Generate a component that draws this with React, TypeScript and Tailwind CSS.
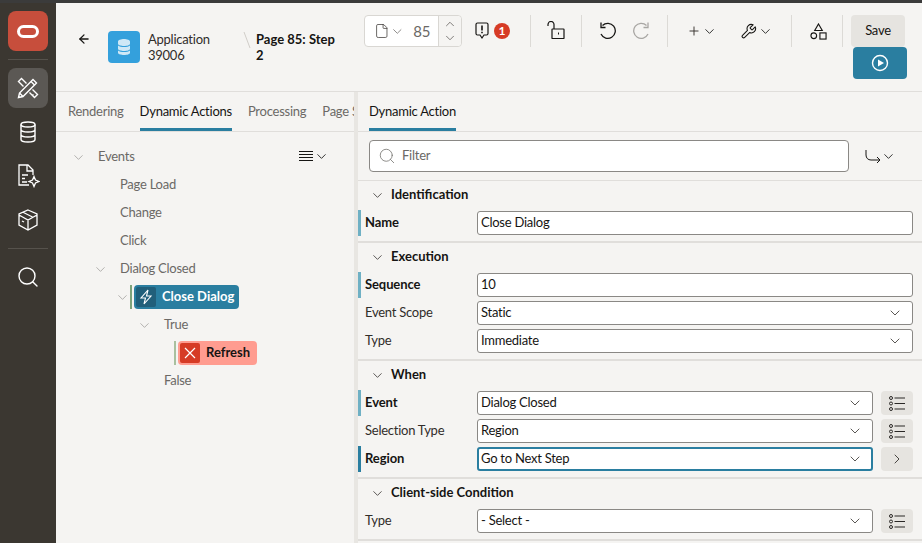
import React from "react";
import { ChevronDown, ChevronUp, ChevronRight, ArrowLeft, Plus, Search, File } from "lucide-react";

const Chev = ({ className = "" }: { className?: string }) => (
  <ChevronDown size={15} strokeWidth={1.25} className={className} />
);

const Divider = () => <div className="w-px h-8 bg-[#dcdad6]" />;

const ListIcon = () => (
  <svg width="16" height="15" viewBox="0 0 16 15" fill="none" stroke="#2a2826" strokeWidth="1">
    <circle cx="2" cy="2" r="1.500" />
    <circle cx="2" cy="7.500" r="1.500" />
    <circle cx="2" cy="13" r="1.500" />
    <path d="M5.500 2H16M5.500 7.500H16M5.500 13H16" />
  </svg>
);

const Sidebar = () => (
  <div className="w-14 shrink-0 bg-[#3b3731] flex flex-col items-center pt-2">
    <div className="w-10 h-10 rounded-lg bg-[#c74e3c] flex items-center justify-center">
      <div className="w-[22px] h-[13px] rounded-full border-[3px] border-white" />
    </div>
    <div className="w-10 h-px bg-[#56524c] mt-2" />
    <div className="w-10 h-10 rounded-lg bg-[#5b5854] mt-2 flex items-center justify-center">
      <svg width="22" height="22" viewBox="0 0 22 22" fill="none" stroke="#fff" strokeWidth="1.400">
        <path d="M1.500 20.500l1-4.500L16 2.500l3.500 3.500L6 19.500z" />
        <path d="M14 4.500l3.500 3.500M2.500 16l3.500 3.500" />
        <path d="M6.500 9.500L1.500 4.500l3-3 5 5M12.500 15.500l3 3 1-1M15.500 12.500l5 5-3 3-5-5" />
      </svg>
    </div>
    <svg className="mt-3" width="24" height="24" viewBox="0 0 24 24" fill="none" stroke="#fff" strokeWidth="1.400">
      <ellipse cx="12" cy="4.500" rx="7" ry="2.500" />
      <path d="M5 4.500v15c0 1.400 3 2.500 7 2.500s7-1.100 7-2.500v-15M5 9.500c0 1.400 3 2.500 7 2.500s7-1.100 7-2.500M5 14.500c0 1.400 3 2.500 7 2.500s7-1.100 7-2.500" />
    </svg>
    <svg className="mt-5" width="24" height="24" viewBox="0 0 24 24" fill="none" stroke="#fff" strokeWidth="1.300">
      <path d="M13 21H3V1h9l5 5v5M11 1v6h6M6 11h6M6 14.500h3M6 18h5" />
      <path d="M18 12.500l1.500 3.500 3.500 1.500-3.500 1.500-1.500 3.500-1.500-3.500-3.500-1.500 3.500-1.500z" />
    </svg>
    <svg className="mt-5" width="24" height="24" viewBox="0 0 24 24" fill="none" stroke="#fff" strokeWidth="1.300">
      <path d="M12 2l9 4v11l-9 5-9-5V6zM3 7l9 5 9-5M12 12v10M7.500 4.500l9 4.500" />
      <path d="M6 13l2 1" />
    </svg>
    <div className="w-10 h-px bg-[#56524c] mt-4" />
    <Search className="mt-4" size={24} strokeWidth={1.400} color="#fff" />
  </div>
);

const Toolbar = () => (
  <div className="h-[89px] shrink-0 flex border-b border-[#e0dedb]">
    <div className="w-[308px] flex pt-7">
      <ArrowLeft className="ml-[21px] mt-[1px]" size={14} strokeWidth={2.200} color="#161513" />
      <div className="ml-[17px] w-8 h-8 rounded-[4px] bg-[#34a0dc] flex items-center justify-center">
        <svg width="12" height="16" viewBox="0 0 12 16" fill="#cfe8f6">
          <path d="M0 2.500C0 1 3 0 6 0s6 1 6 2.500V5c0 1-3 2-6 2S0 6 0 5zM0 6.500C1.500 7.500 3.500 8 6 8s4.500-.5 6-1.500V10c0 1-3 2-6 2s-6-1-6-2zM0 11.500C1.500 12.500 3.500 13 6 13s4.500-.5 6-1.500V14c0 1-3 2-6 2s-6-1-6-2z" />
        </svg>
      </div>
      <div className="ml-2 w-[72px] text-[13px] tracking-[-0.25px] leading-4 text-[#312d2a]">Application 39006</div>
      <svg className="ml-[23px] mt-[1px] shrink-0" width="8" height="16" viewBox="0 0 8 16" stroke="#d0cdc8">
        <path d="M1 0l6 16" />
      </svg>
      <div className="ml-[5px] w-[88px] text-[13px] leading-4 font-bold text-[#161513]">Page 85: Step 2</div>
    </div>
    <div className="flex-1 flex flex-col">
      <div className="flex items-center h-8 mt-3">
        <div className="w-[98px] h-8 rounded-[4px] border border-[#d9d7d3] bg-white flex items-center">
          <File className="ml-[9px]" size={16} strokeWidth={1.100} color="#312d2a" />
          <Chev className="text-[#6b6966]" />
          <span className="ml-[9px] w-[22px] text-[15px] tracking-[-0.25px] text-[#6b6966]">85</span>
          <div className="ml-[3px] w-[24px] h-full border-l border-[#d9d7d3] bg-[#f5f4f2] flex flex-col items-center justify-center rounded-r-[4px]">
            <ChevronUp size={14} strokeWidth={1.250} color="#55524f" />
            <ChevronDown size={14} strokeWidth={1.250} color="#55524f" />
          </div>
        </div>
        <svg className="ml-[13px]" width="14" height="18" viewBox="0 0 14 18" fill="none" stroke="#161513" strokeWidth="1.200">
          <path d="M2.500 1h9a1.500 1.500 0 011.500 1.500v9a1.500 1.500 0 01-1.500 1.500H9l-2 3-2-3H2.500A1.500 1.500 0 011 11.500v-9A1.500 1.500 0 012.500 1z" />
          <path d="M7 3.500v5M7 9.800v1.500" strokeWidth="1.600" />
        </svg>
        <span className="ml-[5px] w-4 h-4 rounded-full bg-[#d63b25] text-white text-[12px] font-bold flex items-center justify-center">1</span>
        <div className="ml-5"><Divider /></div>
        <svg className="ml-4 mb-[2px]" width="18" height="18" viewBox="0 0 18 18" fill="none" stroke="#161513" strokeWidth="1.200">
          <path d="M5.500 8h11a.5.5 0 01.5.500v8.500a.5.5 0 01-.5.500h-11a.5.5 0 01-.5-.5V8.500a.5.5 0 01.5-.5z" />
          <path d="M1 5V3.500a3 3 0 016 0V8" />
          <path d="M11 12.500h1" strokeWidth="1.800" />
        </svg>
        <div className="ml-[16px]"><Divider /></div>
        <svg className="ml-4" width="18" height="18" viewBox="0 0 18 18" fill="none" stroke="#161513" strokeWidth="1.300">
          <path d="M4.500 3.500A7.500 7.500 0 113 12" />
          <path d="M1.500 1v5H6" transform="translate(1.500 -.5)" />
        </svg>
        <svg className="ml-[17px]" width="18" height="18" viewBox="0 0 18 18" fill="none" stroke="#a8a6a3" strokeWidth="1.300">
          <path d="M13.500 3.500A7.500 7.500 0 1015 12" />
          <path d="M16.500 1v5H12" transform="translate(-1.500 -.5)" />
        </svg>
        <div className="ml-[16px]"><Divider /></div>
        <Plus className="ml-[19px]" size={14} strokeWidth={1.600} color="#312d2a" />
        <Chev className="ml-[1px]" />
        <svg className="ml-[23px]" width="17" height="17" viewBox="0 0 24 24" fill="none" stroke="#161513" strokeWidth="1.500" strokeLinejoin="round">
          <path d="M14.700 6.300a1 1 0 000 1.400l1.600 1.600a1 1 0 001.400 0l3.770-3.770a6 6 0 01-7.940 7.940l-6.910 6.910a2.120 2.120 0 01-3-3l6.910-6.910a6 6 0 017.940-7.940z" />
        </svg>
        <Chev className="ml-[1px]" />
        <div className="ml-[18px]"><Divider /></div>
        <svg className="ml-[18px]" width="17" height="17" viewBox="0 0 18 18" fill="none" stroke="#161513" strokeWidth="1.200">
          <path d="M9 1l4 7H5z" />
          <circle cx="4" cy="13.500" r="3" />
          <rect x="10.500" y="10.500" width="6.500" height="6.500" />
        </svg>
        <div className="ml-[15px]"><Divider /></div>
        <div className="ml-[8px] w-[54px] h-8 rounded-[4px] bg-[#e6e4e0] flex items-center justify-center text-[13px] tracking-[-0.25px] text-[#161513]">Save</div>
      </div>
      <div className="ml-[489px] w-[54px] h-8 rounded-[4px] bg-[#2a7ea0] flex items-center justify-center">
        <svg width="18" height="18" viewBox="0 0 18 18" fill="none" stroke="#fff" strokeWidth="1.400">
          <circle cx="9" cy="9" r="7.500" />
          <path d="M7 5.500l6 3.500-6 3.500z" fill="#fff" stroke="none" />
        </svg>
      </div>
    </div>
  </div>
);

const Tab = ({ label, active, className = "" }: { label: string; active?: boolean; className?: string }) => (
  <div className={`h-full flex items-center text-[13px] tracking-[-0.25px] whitespace-nowrap border-b-[3px] pt-[3px] ${active ? "border-[#2a7ea0] text-[#161513]" : "border-transparent text-[#6b6966]"} ${className}`}>
    {label}
  </div>
);

const TreeRow = ({ label, pad, open }: { label: string; pad: string; open?: boolean }) => (
  <div className={`h-7 flex items-center text-[13px] tracking-[-0.25px] text-[#6b6966] ${pad}`}>
    <span className="w-5 shrink-0">{open && <ChevronDown className="-ml-[7px]" size={15} strokeWidth={1} color="#8a8885" />}</span>
    {label}
  </div>
);

const LeftPanel = () => (
  <div className="w-[298px] shrink-0 flex flex-col">
    <div className="h-10 flex gap-4 pl-3 border-b border-[#e0dedb] overflow-hidden">
      <Tab label="Rendering" />
      <Tab label="Dynamic Actions" active />
      <Tab label="Processing" />
      <Tab label="Page Shared Components" />
    </div>
    <div className="relative pt-[11px]">
      <div className="absolute right-[25px] top-[17px] flex items-center">
        <svg width="14" height="11" viewBox="0 0 14 11" stroke="#161513">
          <path d="M0 .5h14M0 3.500h14M0 6.500h14M0 9.500h14" />
        </svg>
        <Chev className="ml-[1px]" />
      </div>
      <TreeRow label="Events" pad="pl-[22px]" open />
      <TreeRow label="Page Load" pad="pl-[44px]" />
      <TreeRow label="Change" pad="pl-[44px]" />
      <TreeRow label="Click" pad="pl-[44px]" />
      <TreeRow label="Dialog Closed" pad="pl-[44px]" open />
      <div className="h-7 flex items-center pl-[59px]">
        <ChevronDown size={15} strokeWidth={1} color="#8a8885" />
        <div className="w-[2px] h-6 bg-[#7ea37a]" />
        <div className="ml-[2px] w-[105px] h-6 rounded-[4px] bg-[#2a7ea0] flex items-center pl-[2px]">
          <span className="w-5 h-5 rounded-[2px] bg-[#215f7a] flex items-center justify-center">
            <svg width="14" height="16" viewBox="0 0 14 16" fill="none" stroke="#fff" strokeWidth="1.100">
              <path d="M9 1L2 9h4.500L5 15l7-8H7.500z" />
            </svg>
          </span>
          <span className="ml-[6px] text-[13px] font-bold whitespace-nowrap text-white">Close Dialog</span>
        </div>
      </div>
      <TreeRow label="True" pad="pl-[88px]" open />
      <div className="h-7 flex items-center pl-[118px]">
        <div className="w-[2px] h-6 bg-[#a9c09f]" />
        <div className="ml-[2px] w-[79px] h-6 rounded-[4px] bg-[#ff9c90] flex items-center pl-[2px]">
          <span className="w-5 h-5 rounded-[2px] bg-[#d63b25] flex items-center justify-center">
            <svg width="12" height="12" viewBox="0 0 12 12" stroke="#fff" strokeWidth="1.200">
              <path d="M1 1l10 10M11 1L1 11" />
            </svg>
          </span>
          <span className="ml-[6px] text-[13px] font-bold text-[#161513]">Refresh</span>
        </div>
      </div>
      <TreeRow label="False" pad="pl-[88px]" />
    </div>
  </div>
);

const Field = ({ value, select, focused }: { value: string; select?: boolean; focused?: boolean }) => (
  <div className={`flex-1 h-6 rounded-[3px] bg-white flex items-center text-[13px] tracking-[-0.25px] text-[#161513] ${focused ? "border-2 border-[#2a7ea0] px-[2px]" : "border border-[#8a8885] px-[3px]"}`}>
    <span className="flex-1">{value}</span>
    {select && <ChevronDown className="mr-[6px]" size={16} strokeWidth={1.200} color="#312d2a" />}
  </div>
);

const Row = ({ label, value, select, bar, action, focused }: { label: string; value: string; select?: boolean; bar?: string; action?: "list" | "next"; focused?: boolean }) => (
  <div className="h-7 flex items-center pr-[9px]">
    <div className={`w-[3px] h-[26px] ${bar || ""}`} />
    <div className={`w-[116px] pl-1 text-[13px] ${bar ? "font-bold text-[#161513] tracking-[-0.1px]" : "text-[#312d2a] tracking-[-0.25px]"}`}>{label}</div>
    <Field value={value} select={select} focused={focused} />
    {action && (
      <div className="ml-2 w-8 h-6 rounded-[4px] bg-[#e6e4e0] flex items-center justify-center">
        {action === "list" ? <ListIcon /> : <ChevronRight size={16} strokeWidth={1.300} color="#312d2a" />}
      </div>
    )}
  </div>
);

const Section = ({ title, children }: { title: string; children: React.ReactNode }) => (
  <div className="pb-1 border-b-2 border-[#e0dedb]">
    <div className="h-7 flex items-center pl-[12px] text-[13px] font-bold text-[#161513]">
      <Chev className="mr-[6px] text-[#312d2a]" />
      <span>{title}</span>
    </div>
    {children}
  </div>
);

const RightPanel = () => (
  <div className="flex-1 flex flex-col border-l-4 border-[#e8e6e2] overflow-hidden">
    <div className="h-10 flex pl-[11px] border-b border-[#e0dedb] shrink-0">
      <Tab label="Dynamic Action" active />
    </div>
    <div className="h-[49px] shrink-0 flex items-center pl-[11px] border-b border-[#e0dedb]">
      <div className="w-[480px] h-8 rounded-[4px] border border-[#8a8885] bg-white flex items-center pl-2 text-[13px] tracking-[-0.25px] text-[#6b6966]">
        <Search size={18} strokeWidth={1} color="#6b6966" />
        <span className="ml-[6px]">Filter</span>
      </div>
      <svg className="ml-[16px]" width="16" height="14" viewBox="0 0 16 14" fill="none" stroke="#161513" strokeWidth="1">
        <path d="M1 1v5c0 3 2 5 5 5h9M12 8l3 3-3 3" />
      </svg>
      <Chev />
    </div>
    <Section title="Identification">
      <Row label="Name" value="Close Dialog" bar="bg-[#6fb0c4]" />
    </Section>
    <Section title="Execution">
      <Row label="Sequence" value="10" bar="bg-[#6fb0c4]" />
      <Row label="Event Scope" value="Static" select />
      <Row label="Type" value="Immediate" select />
    </Section>
    <Section title="When">
      <Row label="Event" value="Dialog Closed" select bar="bg-[#6fb0c4]" action="list" />
      <Row label="Selection Type" value="Region" select action="list" />
      <Row label="Region" value="Go to Next Step" select bar="bg-[#2a7ea0]" action="next" focused />
    </Section>
    <Section title="Client-side Condition">
      <Row label="Type" value="- Select -" select action="list" />
    </Section>
  </div>
);

export default function App() {
  return (
    <div className="w-[922px] h-[543px] overflow-hidden flex flex-col bg-[#f5f4f2] font-['Lato',sans-serif]">
      <div className="h-[3px] shrink-0 bg-[#3b3b3b]" />
      <div className="flex-1 flex min-h-0">
        <Sidebar />
        <div className="flex-1 flex flex-col min-w-0">
          <Toolbar />
          <div className="flex-1 flex min-h-0">
            <LeftPanel />
            <RightPanel />
          </div>
        </div>
      </div>
    </div>
  );
}
